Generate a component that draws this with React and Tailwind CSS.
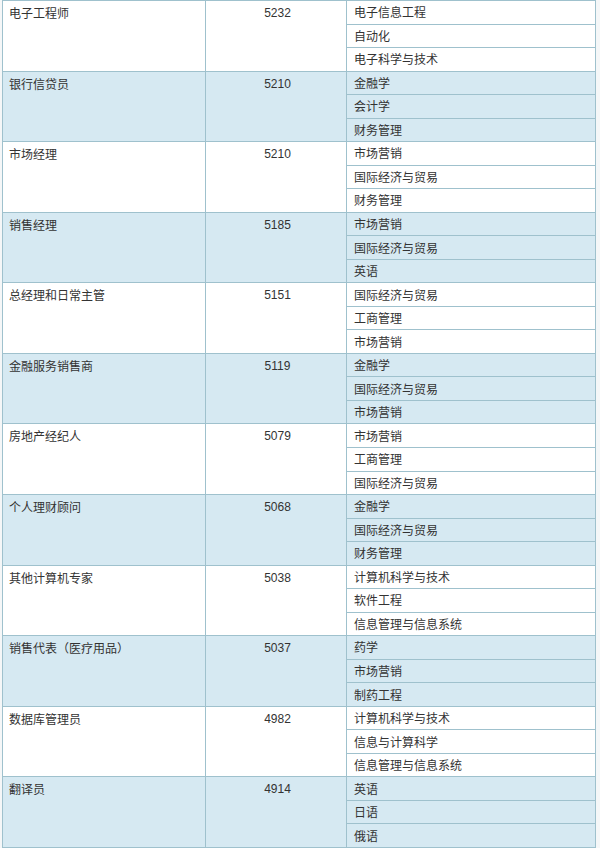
import React from 'react';

const rows = [
  { job: '电子工程师', pay: '5232', majors: ['电子信息工程', '自动化', '电子科学与技术'] },
  { job: '银行信贷员', pay: '5210', majors: ['金融学', '会计学', '财务管理'] },
  { job: '市场经理', pay: '5210', majors: ['市场营销', '国际经济与贸易', '财务管理'] },
  { job: '销售经理', pay: '5185', majors: ['市场营销', '国际经济与贸易', '英语'] },
  { job: '总经理和日常主管', pay: '5151', majors: ['国际经济与贸易', '工商管理', '市场营销'] },
  { job: '金融服务销售商', pay: '5119', majors: ['金融学', '国际经济与贸易', '市场营销'] },
  { job: '房地产经纪人', pay: '5079', majors: ['市场营销', '工商管理', '国际经济与贸易'] },
  { job: '个人理财顾问', pay: '5068', majors: ['金融学', '国际经济与贸易', '财务管理'] },
  { job: '其他计算机专家', pay: '5038', majors: ['计算机科学与技术', '软件工程', '信息管理与信息系统'] },
  { job: '销售代表（医疗用品）', pay: '5037', majors: ['药学', '市场营销', '制药工程'] },
  { job: '数据库管理员', pay: '4982', majors: ['计算机科学与技术', '信息与计算科学', '信息管理与信息系统'] },
  { job: '翻译员', pay: '4914', majors: ['英语', '日语', '俄语'] },
];

const App = () => {
  return (
    <div className="w-[600px] h-[848px] bg-[#f5f7f8] overflow-hidden">
      <div
        className="ml-[2px] w-[594px] h-[848px] flex flex-col border-x border-t border-[#9fc1cd] text-[12px] text-[#333]"
        style={{ fontFamily: '"Noto Sans CJK SC", "Noto Sans", sans-serif' }}
      >
        {rows.map((row, i) => {
          const bg = i % 2 === 1 ? 'bg-[#d6e9f2]' : 'bg-white';
          return (
            <div key={row.job} className={`flex flex-1 border-b border-[#9fc1cd] ${bg}`}>
              <div className="w-[203px] border-r border-[#9fc1cd] pl-[6px] pt-[4px] leading-[16px]">
                {row.job}
              </div>
              <div
                className="w-[141px] border-r border-[#9fc1cd] text-center pt-[4px] pl-[3px] leading-[16px]"
                style={{ fontFamily: '"Liberation Sans", Arial, sans-serif' }}
              >
                {row.pay}
              </div>
              <div className="flex-1 flex flex-col">
                {row.majors.map((m, j) => (
                  <div
                    key={m + j}
                    className={`flex-1 flex items-center pl-[7px] ${j < 2 ? 'border-b border-[#9fc1cd]' : ''}`}
                  >
                    {m}
                  </div>
                ))}
              </div>
            </div>
          );
        })}
      </div>
    </div>
  );
};

export default App;
